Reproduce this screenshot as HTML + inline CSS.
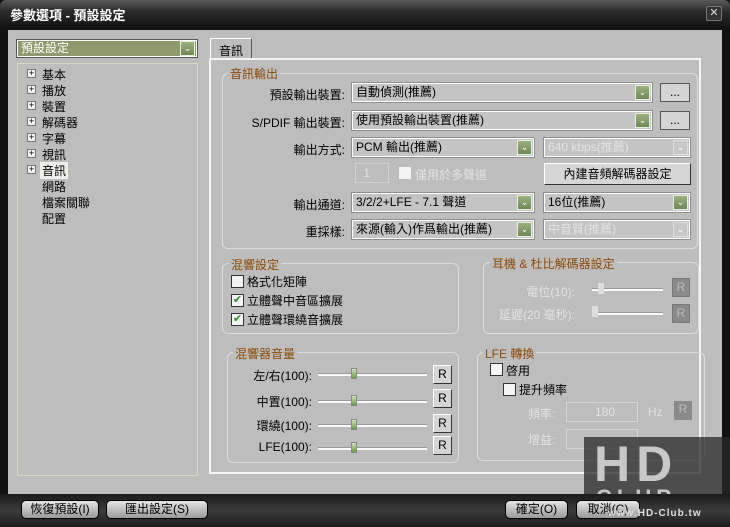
<!DOCTYPE html>
<html><head><meta charset="utf-8"><style>
*{box-sizing:border-box;margin:0;padding:0}
body{width:730px;height:527px;overflow:hidden;background:#111;font-family:"Liberation Sans","Noto Sans CJK TC",sans-serif;font-size:12px;color:#000;position:relative}
.a{position:absolute}
.title{left:0;top:0;width:730px;height:29px;background:linear-gradient(#5a5a5a,#2a2a2a 40%,#111);color:#fff;font-weight:bold;font-size:13px;padding:5px 10px;border-radius:6px 6px 0 0}
.main{left:8px;top:30px;width:714px;height:464px;background:#bdbdbd}
.bottom{left:0;top:494px;width:730px;height:33px;background:linear-gradient(#1a1a1a,#3c3c3c 50%,#1c1c1c)}
.btn{background:linear-gradient(#e6e6e6,#9a9a9a);border:1px solid #000;border-radius:5px;text-align:center;line-height:17px;font-size:12px}
.combo{background:#c4c4c4;border:1px solid #fff;outline:1px solid #8e8e8e;height:19px;line-height:17px;padding-left:3px}
.combo .ar{position:absolute;right:1px;top:1px;width:15px;height:15px;background:linear-gradient(#9bb080,#6f8857);border:1px solid #e8eedd;color:#fff;font-size:9px;line-height:13px;text-align:center}
.dis{color:#e2e2e2}
.dis .ar{background:#c8c8c8;border-color:#ddd}
.gb{border:1px solid #dcdcdc;border-radius:6px}
.gt{color:#8a4a0a;background:#bdbdbd;padding:0 2px;font-size:12px}
.lbl{text-align:right;width:120px}
.cb{width:13px;height:13px;border:1px solid #333;background:#f4f4f4;font-size:11px;line-height:11px;color:#2a8a2a;text-align:center}
.track{height:3px;background:#fafafa;border-top:1px solid #999}
.th{width:6px;height:11px;background:linear-gradient(#cfe0b8,#6f9a4a);border:1px solid #888}
.tree div{position:absolute;left:42px;font-size:12px}
.pl{position:absolute;left:-15px;top:3px;width:9px;height:9px;border:1px solid #777;background:#f0f0f0;font-size:9px;line-height:7px;text-align:center}
.rb{width:19px;height:19px;border:1px solid #333;border-top-color:#fff;border-left-color:#fff;background:#d4d4d4;text-align:center;line-height:17px}
</style></head><body>
<div class="a title">參數選項 - 預設設定</div>
<div class="a" style="left:706px;top:6px;width:16px;height:15px;border:1px solid #777;border-radius:2px;background:#333;color:#ddd;font-size:11px;line-height:13px;text-align:center">✕</div>
<div class="a main"></div>
<div class="a combo" style="left:17px;top:40px;width:180px;height:17px;background:#8e9a6c;color:#fff;line-height:15px;outline-color:#555">預設設定<div class="ar" style="top:0">⌄</div></div>
<div class="a" style="left:17px;top:63px;width:181px;height:413px;border:1px solid #d4d8c0"></div>
<div class="tree">
<div style="top:66px"><span class="pl">+</span>基本</div>
<div style="top:82px"><span class="pl">+</span>播放</div>
<div style="top:98px"><span class="pl">+</span>裝置</div>
<div style="top:114px"><span class="pl">+</span>解碼器</div>
<div style="top:130px"><span class="pl">+</span>字幕</div>
<div style="top:146px"><span class="pl">+</span>視訊</div>
<div style="top:162px;background:#eeeeea;padding:0 2px;left:40px"><span class="pl" style="left:-13px">+</span>音訊</div>
<div style="top:178px">網路</div>
<div style="top:194px">檔案關聯</div>
<div style="top:210px">配置</div>
</div>
<div class="a" style="left:210px;top:38px;width:42px;height:21px;border:1px solid #fff;border-bottom:none;border-right-color:#555;padding:3px 8px">音訊</div>
<div class="a" style="left:209px;top:58px;width:492px;height:416px;border:2px solid #f4f4f4"></div>
<div class="a gb" style="left:222px;top:73px;width:476px;height:176px"></div>
<div class="a gt" style="left:228px;top:65px">音訊輸出</div>
<div class="a lbl" style="left:225px;top:86px">預設輸出裝置:</div>
<div class="a combo" style="left:352px;top:83px;width:300px">自動偵測(推薦)<div class="ar">⌄</div></div>
<div class="a btn" style="left:660px;top:83px;width:30px;height:19px;border-radius:0;border-color:#555;background:#d4d4d4">...</div>
<div class="a lbl" style="left:225px;top:114px">S/PDIF 輸出裝置:</div>
<div class="a combo" style="left:352px;top:111px;width:300px">使用預設輸出裝置(推薦)<div class="ar">⌄</div></div>
<div class="a btn" style="left:660px;top:111px;width:30px;height:19px;border-radius:0;border-color:#555;background:#d4d4d4">...</div>
<div class="a lbl" style="left:225px;top:141px">輸出方式:</div>
<div class="a combo" style="left:352px;top:138px;width:182px">PCM 輸出(推薦)<div class="ar">⌄</div></div>
<div class="a combo dis" style="left:544px;top:138px;width:146px">640 kbps(推薦)<div class="ar">⌄</div></div>
<div class="a dis" style="left:355px;top:163px;width:34px;height:20px;border:1px solid #d0d0d0;text-align:right;padding:2px 18px 0 0">1</div>
<div class="a" style="left:399px;top:167px;width:12px;height:12px;background:#f4f4f4"></div>
<div class="a dis" style="left:415px;top:166px">僅用於多聲道</div>
<div class="a" style="left:544px;top:163px;width:147px;height:22px;background:#d6d6d6;border:1px solid #333;border-top-color:#fff;border-left-color:#fff;text-align:center;line-height:20px">內建音頻解碼器設定</div>
<div class="a lbl" style="left:225px;top:196px">輸出通道:</div>
<div class="a combo" style="left:352px;top:193px;width:182px">3/2/2+LFE - 7.1 聲道<div class="ar">⌄</div></div>
<div class="a combo" style="left:544px;top:193px;width:146px">16位(推薦)<div class="ar">⌄</div></div>
<div class="a lbl" style="left:225px;top:223px">重採樣:</div>
<div class="a combo" style="left:352px;top:220px;width:182px">來源(輸入)作爲輸出(推薦)<div class="ar">⌄</div></div>
<div class="a combo dis" style="left:544px;top:220px;width:146px">中音質(推薦)<div class="ar">⌄</div></div>
<div class="a gb" style="left:222px;top:263px;width:237px;height:71px"></div>
<div class="a gt" style="left:229px;top:256px">混響設定</div>
<div class="a cb" style="left:231px;top:275px"></div><div class="a" style="left:247px;top:273px">格式化矩陣</div>
<div class="a cb" style="left:231px;top:294px">✔</div><div class="a" style="left:247px;top:292px">立體聲中音區擴展</div>
<div class="a cb" style="left:231px;top:313px">✔</div><div class="a" style="left:247px;top:311px">立體聲環繞音擴展</div>
<div class="a gb" style="left:483px;top:262px;width:216px;height:72px"></div>
<div class="a gt" style="left:490px;top:255px">耳機 &amp; 杜比解碼器設定</div>
<div class="a dis" style="left:500px;top:283px;width:75px;text-align:right">電位(10):</div>
<div class="a track" style="left:592px;top:288px;width:71px"></div><div class="a" style="left:598px;top:283px;width:6px;height:11px;background:#ddd"></div>
<div class="a" style="left:672px;top:278px;width:18px;height:19px;background:#8a8a8a;border:1px solid #777;color:#bbb;text-align:center;line-height:17px">R</div>
<div class="a dis" style="left:490px;top:306px;width:85px;text-align:right">延遲(20 毫秒):</div>
<div class="a track" style="left:592px;top:312px;width:71px"></div><div class="a" style="left:592px;top:306px;width:6px;height:11px;background:#ddd"></div>
<div class="a" style="left:672px;top:304px;width:18px;height:19px;background:#8a8a8a;border:1px solid #777;color:#bbb;text-align:center;line-height:17px">R</div>
<div class="a gb" style="left:227px;top:352px;width:232px;height:111px"></div>
<div class="a gt" style="left:233px;top:345px">混響器音量</div>
<div class="a" style="left:240px;top:367px;width:72px;text-align:right">左/右(100):</div>
<div class="a" style="left:240px;top:393px;width:72px;text-align:right">中置(100):</div>
<div class="a" style="left:240px;top:417px;width:72px;text-align:right">環繞(100):</div>
<div class="a" style="left:240px;top:440px;width:72px;text-align:right">LFE(100):</div>
<div class="a track" style="left:318px;top:373px;width:109px"></div><div class="a th" style="left:351px;top:368px"></div>
<div class="a track" style="left:318px;top:400px;width:109px"></div><div class="a th" style="left:351px;top:395px"></div>
<div class="a track" style="left:318px;top:424px;width:109px"></div><div class="a th" style="left:351px;top:419px"></div>
<div class="a track" style="left:318px;top:447px;width:109px"></div><div class="a th" style="left:351px;top:442px"></div>
<div class="a rb" style="left:433px;top:365px">R</div>
<div class="a rb" style="left:433px;top:389px">R</div>
<div class="a rb" style="left:433px;top:414px">R</div>
<div class="a rb" style="left:433px;top:436px">R</div>
<div class="a gb" style="left:477px;top:352px;width:228px;height:109px"></div>
<div class="a gt" style="left:483px;top:345px">LFE 轉換</div>
<div class="a cb" style="left:490px;top:363px"></div><div class="a" style="left:506px;top:362px">啓用</div>
<div class="a cb" style="left:503px;top:383px"></div><div class="a" style="left:519px;top:381px">提升頻率</div>
<div class="a dis" style="left:528px;top:405px">頻率:</div>
<div class="a dis" style="left:566px;top:402px;width:72px;height:20px;border:1px solid #d4d4d4;text-align:right;padding:2px 22px 0 0">180</div>
<div class="a dis" style="left:648px;top:405px">Hz</div>
<div class="a" style="left:674px;top:401px;width:18px;height:19px;background:#8a8a8a;color:#bbb;text-align:center;line-height:17px">R</div>
<div class="a dis" style="left:528px;top:431px">增益:</div>
<div class="a dis" style="left:566px;top:429px;width:72px;height:20px;border:1px solid #d4d4d4"></div>
<div class="a" style="left:584px;top:437px;width:146px;height:83px;background:rgba(40,40,40,.75);overflow:hidden">
<div class="a" style="left:10px;top:2px;font-size:50px;font-weight:bold;color:#c8c8c8;letter-spacing:6px;line-height:50px">HD</div>
<div class="a" style="left:12px;top:50px;font-size:22px;font-weight:bold;color:#c8c8c8;letter-spacing:5px;line-height:22px">CLUB</div>
</div>
<div class="a bottom"></div>
<div class="a btn" style="left:21px;top:500px;width:78px;height:19px">恢復預設(I)</div>
<div class="a btn" style="left:106px;top:500px;width:102px;height:19px">匯出設定(S)</div>
<div class="a btn" style="left:505px;top:500px;width:63px;height:19px">確定(O)</div>
<div class="a btn" style="left:576px;top:500px;width:64px;height:19px">取消(C)</div>
<div class="a" style="left:608px;top:508px;color:#ddd;font-size:10px;font-weight:bold;letter-spacing:1px">www.HD-Club.tw</div>
</body></html>
